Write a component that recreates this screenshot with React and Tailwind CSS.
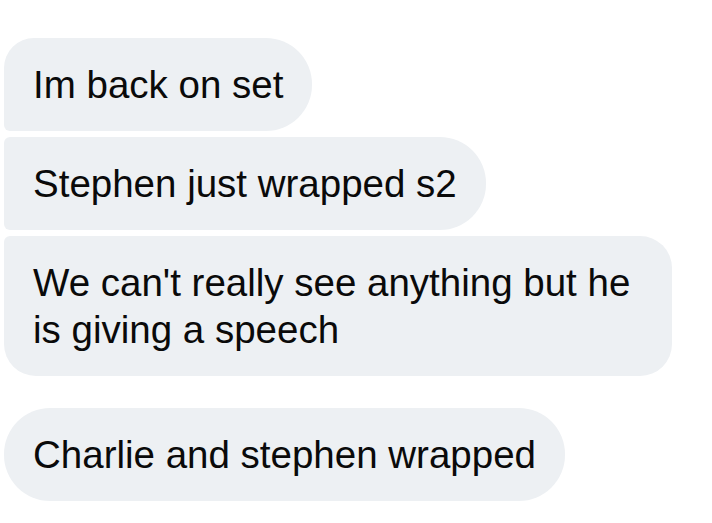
import React from 'react';

const messages = [
    { text: 'Im back on set', shape: 'rounded-tl-[30px] rounded-bl-[6px] rounded-r-[46px]' },
    { text: 'Stephen just wrapped s2', shape: 'rounded-l-[6px] rounded-r-[46px]' },
    { text: "We can't really see anything but he is giving a speech", shape: 'rounded-tl-[6px] rounded-bl-[32px] rounded-r-[32px]' },
];

const Bubble = ({ text, shape, className = '' }) => (
    <div className={`w-fit max-w-[668px] bg-[#edf0f3] px-[29px] py-[23px] text-[38.5px] leading-[47px] text-[#0a0a0a] ${shape} ${className}`}>
        {text}
    </div>
);

const App = () => {
    return (
        <div
            className="w-[712px] h-[523px] overflow-hidden bg-white pl-[4px] pt-[38px]"
            style={{ fontFamily: '"Liberation Sans", Arial, sans-serif' }}
        >
            <div className="flex flex-col gap-[6px]">
                {messages.map((m, i) => (
                    <Bubble key={i} text={m.text} shape={m.shape} />
                ))}
            </div>
            <Bubble text="Charlie and stephen wrapped" shape="rounded-[46px]" className="mt-[32px]" />
        </div>
    );
};

export default App;
